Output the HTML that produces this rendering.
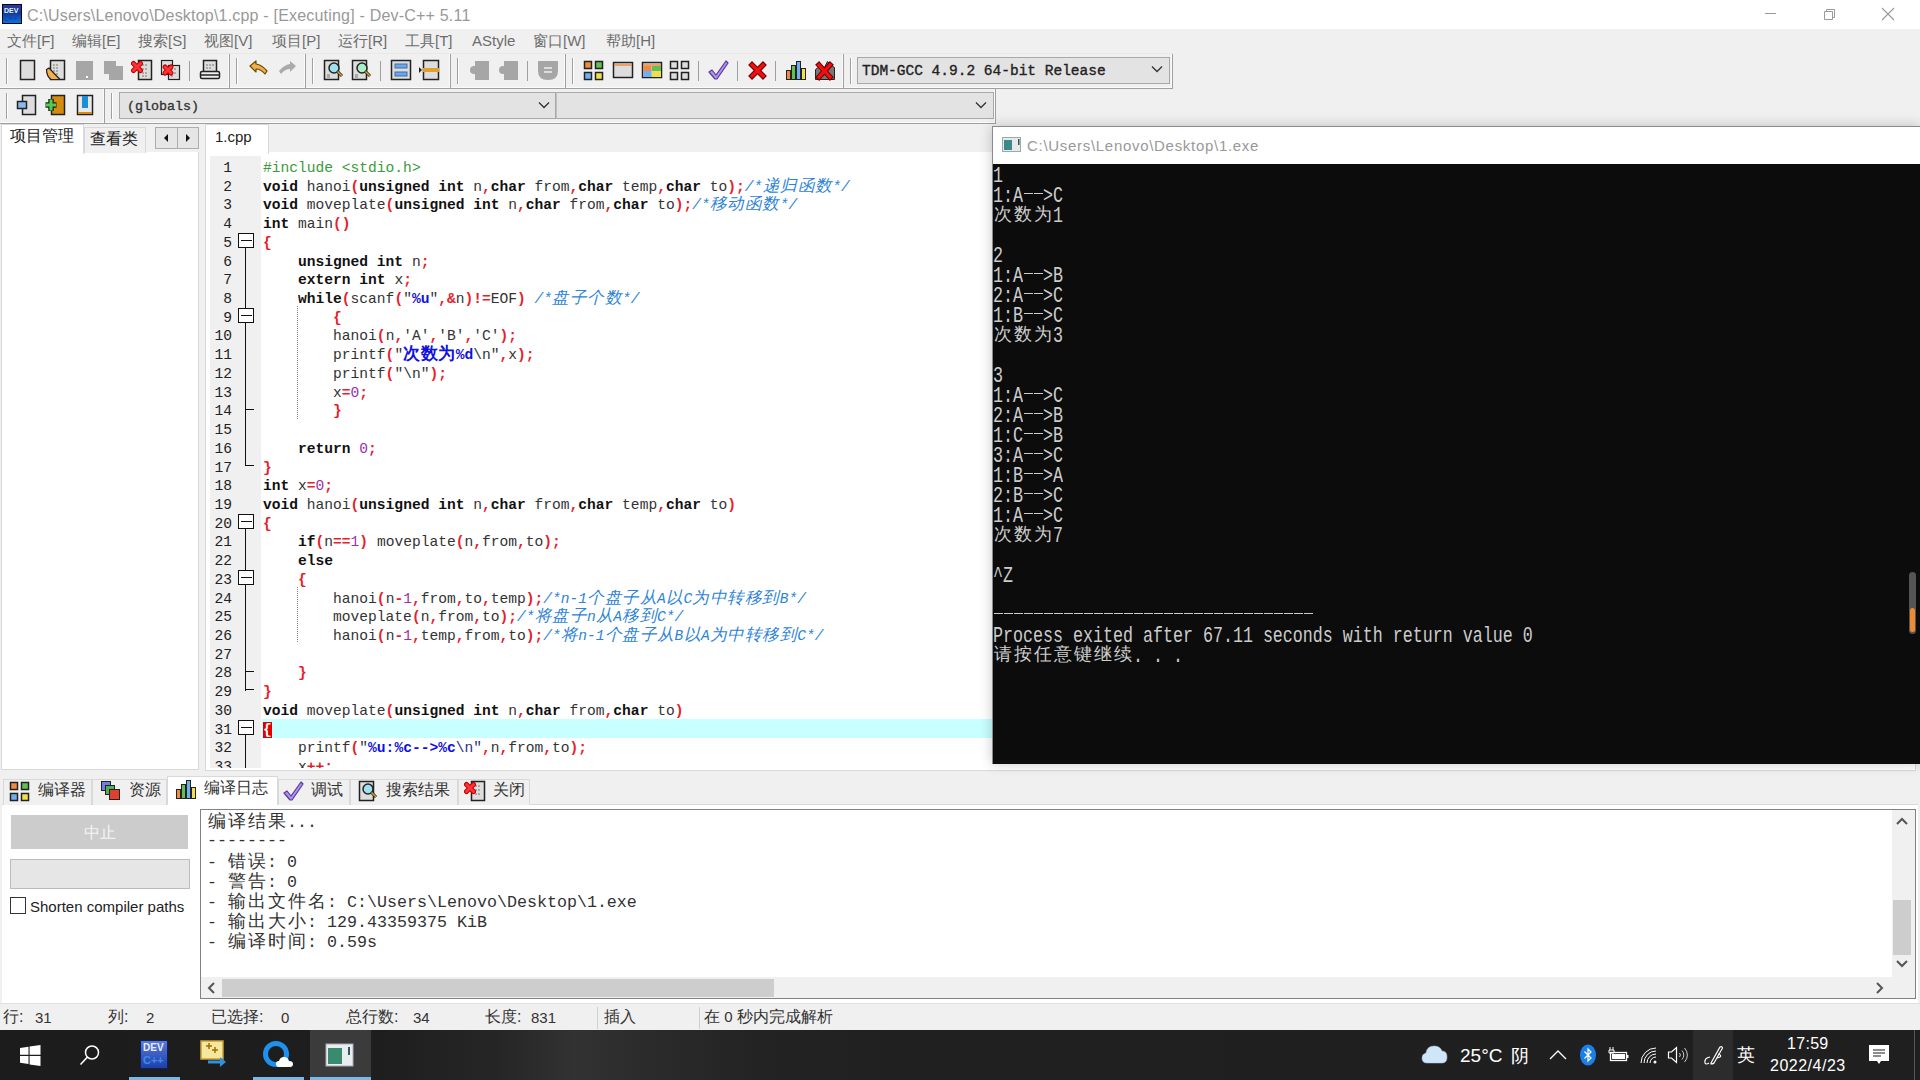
<!DOCTYPE html><html><head><meta charset="utf-8"><style>
*{margin:0;padding:0;box-sizing:border-box}
html,body{width:1920px;height:1080px;overflow:hidden;background:#f0f0f0;font-family:"Liberation Sans",sans-serif}
.a{position:absolute}
.t{position:absolute;white-space:pre;line-height:1}
.mono{font-family:"Liberation Mono",monospace}
.serif{font-family:"Liberation Serif",serif}
</style></head><body>
<div class="a" style="left:0;top:0;width:1920px;height:29px;background:#fff"></div>
<div class="a" style="left:2px;top:4px;width:20px;height:20px;background:linear-gradient(#2a3aa0,#103a9a 45%,#1470e0);border:1.5px solid #050520"></div>
<div class="t" style="left:4px;top:7px;font-size:7px;font-weight:bold;color:#e8eeff">DEV</div>
<div class="t" style="left:4px;top:15px;font-size:7px;font-weight:bold;color:#0a4ab0">C++</div>
<div class="t" style="left:27px;top:8px;font-size:16px;letter-spacing:0.2px;color:#999">C:\Users\Lenovo\Desktop\1.cpp - [Executing] - Dev-C++ 5.11</div>
<div class="a" style="left:1765px;top:13px;width:11px;height:1px;background:#999"></div>
<svg class="a" style="left:1822px;top:7px" width="14" height="14"><path d="M2.5 4.5h8v8h-8z M4.5 4.5v-2h8v8h-2" fill="none" stroke="#999" stroke-width="1"/></svg>
<svg class="a" style="left:1881px;top:7px" width="14" height="14"><path d="M1 1L13 13M13 1L1 13" stroke="#999" stroke-width="1.1"/></svg>
<div class="t" style="left:7px;top:33px;font-size:15px;color:#6d6d6d">文件[F]</div>
<div class="t" style="left:72px;top:33px;font-size:15px;color:#6d6d6d">编辑[E]</div>
<div class="t" style="left:138px;top:33px;font-size:15px;color:#6d6d6d">搜索[S]</div>
<div class="t" style="left:204px;top:33px;font-size:15px;color:#6d6d6d">视图[V]</div>
<div class="t" style="left:272px;top:33px;font-size:15px;color:#6d6d6d">项目[P]</div>
<div class="t" style="left:338px;top:33px;font-size:15px;color:#6d6d6d">运行[R]</div>
<div class="t" style="left:405px;top:33px;font-size:15px;color:#6d6d6d">工具[T]</div>
<div class="t" style="left:472px;top:33px;font-size:15px;color:#6d6d6d">AStyle</div>
<div class="t" style="left:533px;top:33px;font-size:15px;color:#6d6d6d">窗口[W]</div>
<div class="t" style="left:606px;top:33px;font-size:15px;color:#6d6d6d">帮助[H]</div>
<div class="a" style="left:0;top:53px;width:1173px;height:1px;background:#e8e8e8"></div>
<div class="a" style="left:0px;top:54px;width:230px;height:35px;border-right:1px solid #a0a0a0;border-bottom:1px solid #a0a0a0;box-shadow:inset -1px -1px 0 #fafafa"></div>
<div class="a" style="left:6px;top:58px;width:2px;height:26px;border-left:1px solid #a0a0a0;border-right:1px solid #fff"></div>
<div class="a" style="left:230px;top:54px;width:76px;height:35px;border-right:1px solid #a0a0a0;border-bottom:1px solid #a0a0a0;box-shadow:inset -1px -1px 0 #fafafa"></div>
<div class="a" style="left:236px;top:58px;width:2px;height:26px;border-left:1px solid #a0a0a0;border-right:1px solid #fff"></div>
<div class="a" style="left:306px;top:54px;width:145px;height:35px;border-right:1px solid #a0a0a0;border-bottom:1px solid #a0a0a0;box-shadow:inset -1px -1px 0 #fafafa"></div>
<div class="a" style="left:312px;top:58px;width:2px;height:26px;border-left:1px solid #a0a0a0;border-right:1px solid #fff"></div>
<div class="a" style="left:451px;top:54px;width:115px;height:35px;border-right:1px solid #a0a0a0;border-bottom:1px solid #a0a0a0;box-shadow:inset -1px -1px 0 #fafafa"></div>
<div class="a" style="left:457px;top:58px;width:2px;height:26px;border-left:1px solid #a0a0a0;border-right:1px solid #fff"></div>
<div class="a" style="left:566px;top:54px;width:278px;height:35px;border-right:1px solid #a0a0a0;border-bottom:1px solid #a0a0a0;box-shadow:inset -1px -1px 0 #fafafa"></div>
<div class="a" style="left:572px;top:58px;width:2px;height:26px;border-left:1px solid #a0a0a0;border-right:1px solid #fff"></div>
<div class="a" style="left:844px;top:54px;width:329px;height:35px;border-right:1px solid #a0a0a0;border-bottom:1px solid #a0a0a0;box-shadow:inset -1px -1px 0 #fafafa"></div>
<div class="a" style="left:850px;top:58px;width:2px;height:26px;border-left:1px solid #a0a0a0;border-right:1px solid #fff"></div>
<div class="a" style="left:0px;top:89px;width:105px;height:35px;border-right:1px solid #a0a0a0;border-bottom:1px solid #a0a0a0;box-shadow:inset -1px -1px 0 #fafafa"></div>
<div class="a" style="left:6px;top:93px;width:2px;height:26px;border-left:1px solid #a0a0a0;border-right:1px solid #fff"></div>
<div class="a" style="left:105px;top:89px;width:891px;height:35px;border-right:1px solid #a0a0a0;border-bottom:1px solid #a0a0a0;box-shadow:inset -1px -1px 0 #fafafa"></div>
<div class="a" style="left:111px;top:93px;width:2px;height:26px;border-left:1px solid #a0a0a0;border-right:1px solid #fff"></div>
<svg class="a" style="left:17px;top:59px" width="22" height="22" viewBox="0 0 22 22"><rect x="3.5" y="1.5" width="14" height="19" fill="#ddd" stroke="#222" stroke-width="1.5"/><path d="M5 3h9v16H5z" fill="url(#g1)" opacity="0"/></svg>
<svg class="a" style="left:45px;top:59px" width="22" height="22" viewBox="0 0 22 22"><rect x="5.5" y="1.5" width="14" height="19" fill="#ddd" stroke="#222" stroke-width="1.5"/><path d="M8 6h2M11 6h2M8 9h2M11 9h2M8 12h2M11 12h2M8 15h2M11 15h2" stroke="#777" stroke-width="1"/><path d="M1.5 10.5 L4 9 L15 20.5 L6 20.5 Q1.5 17 1.5 10.5z" fill="#f2b04a" stroke="#222" stroke-width="1.2"/></svg>
<svg class="a" style="left:74px;top:59px" width="22" height="22" viewBox="0 0 22 22"><path d="M2 2h17v19H2z" fill="#a6a6a6"/><rect x="12" y="17" width="2" height="2" fill="#fff"/></svg>
<svg class="a" style="left:103px;top:59px" width="22" height="22" viewBox="0 0 22 22"><path d="M1 2h12v13H1z" fill="#a6a6a6"/><path d="M6 7h14v14H6z" fill="#a6a6a6"/></svg>
<svg class="a" style="left:131px;top:59px" width="22" height="22" viewBox="0 0 22 22"><rect x="7.5" y="1.5" width="13" height="19" fill="#ddd" stroke="#222" stroke-width="1.5"/><path d="M11 6h2M14 6h2M11 10h2M14 10h2M11 14h2M14 14h2M11 17h2M14 17h2" stroke="#777"/><path d="M2.5 4.5L9.5 11.5M9.5 4.5L2.5 11.5" stroke="#b00" stroke-width="5" stroke-linecap="round"/><path d="M2.5 4.5L9.5 11.5M9.5 4.5L2.5 11.5" stroke="#f33" stroke-width="3" stroke-linecap="round"/></svg>
<svg class="a" style="left:160px;top:59px" width="22" height="22" viewBox="0 0 22 22"><rect x="1.5" y="1.5" width="11" height="14" fill="#ddd" stroke="#222" stroke-width="1.2"/><rect x="8.5" y="6.5" width="11" height="14" fill="#ddd" stroke="#222" stroke-width="1.2"/><path d="M11 10h2M14 10h2M11 14h2M14 14h2M11 17h2" stroke="#777"/><path d="M5 8L11 14M11 8L5 14" stroke="#b00" stroke-width="5" stroke-linecap="round"/><path d="M5 8L11 14M11 8L5 14" stroke="#f33" stroke-width="3" stroke-linecap="round"/></svg>
<div class="a" style="left:189px;top:61px;width:1px;height:20px;background:#a0a0a0"></div>
<svg class="a" style="left:199px;top:59px" width="22" height="22" viewBox="0 0 22 22"><rect x="4.5" y="1.5" width="13" height="12" fill="#ddd" stroke="#222" stroke-width="1.5"/><path d="M7 6h2M10 6h2M13 6h2M7 9h2M10 9h2" stroke="#777"/><rect x="1.5" y="12.5" width="19" height="7" rx="1.5" fill="#eee" stroke="#222" stroke-width="1.5"/><path d="M2 16h18" stroke="#222" stroke-width="1.5"/></svg>
<svg class="a" style="left:248px;top:60px" width="22" height="22" viewBox="0 0 22 22"><path d="M2 6 L8 1 L8 4 Q14 5 19 11 L17 14 Q13 9 8 9 L8 12z" fill="#f2b04a" stroke="#6b4a00" stroke-width="1.2" stroke-linejoin="round"/></svg>
<svg class="a" style="left:276px;top:60px" width="22" height="22" viewBox="0 0 22 22"><path d="M20 6 L14 1 L14 4 Q8 5 3 11 L5 14 Q9 9 14 9 L14 12z" fill="#aaa"/></svg>
<svg class="a" style="left:323px;top:59px" width="22" height="22" viewBox="0 0 22 22"><rect x="1.5" y="1.5" width="14" height="19" fill="#ddd" stroke="#222" stroke-width="1.5"/><path d="M4 16h3M4 18h3" stroke="#777"/><circle cx="11" cy="9" r="5" fill="#9fe0f0" stroke="#222" stroke-width="1.5"/><path d="M14.5 12.5L19 17" stroke="#222" stroke-width="3"/><path d="M14.5 12.5L19 17" stroke="#d9a030" stroke-width="1.6"/></svg>
<svg class="a" style="left:351px;top:59px" width="22" height="22" viewBox="0 0 22 22"><rect x="1.5" y="1.5" width="14" height="19" fill="#ddd" stroke="#222" stroke-width="1.5"/><path d="M4 16h3M4 18h3" stroke="#777"/><circle cx="11" cy="9" r="5" fill="#a8efc8" stroke="#222" stroke-width="1.5"/><path d="M14.5 12.5L19 17" stroke="#222" stroke-width="3"/><path d="M14.5 12.5L19 17" stroke="#d9a030" stroke-width="1.6"/></svg>
<div class="a" style="left:380px;top:61px;width:1px;height:20px;background:#a0a0a0"></div>
<svg class="a" style="left:390px;top:59px" width="22" height="22" viewBox="0 0 22 22"><rect x="1.5" y="1.5" width="19" height="19" fill="#ddd" stroke="#222" stroke-width="1.5"/><rect x="5" y="5" width="12" height="4" fill="#6fa6e6" stroke="#3a6fb0"/><rect x="5" y="13" width="12" height="4" fill="#6fa6e6" stroke="#3a6fb0"/></svg>
<svg class="a" style="left:418px;top:59px" width="22" height="22" viewBox="0 0 22 22"><path d="M1 8l3 3-3 3z" fill="#222"/><rect x="5.5" y="1.5" width="15" height="19" fill="#ddd" stroke="#222" stroke-width="1.5"/><rect x="5" y="9" width="16" height="4" fill="#e0a030"/></svg>
<svg class="a" style="left:469px;top:59px" width="22" height="22" viewBox="0 0 22 22"><path d="M6 2h14v19H6z" fill="#a6a6a6"/><circle cx="5" cy="11" r="4" fill="#a6a6a6"/></svg>
<svg class="a" style="left:498px;top:59px" width="22" height="22" viewBox="0 0 22 22"><path d="M6 2h14v19H6z" fill="#a6a6a6"/><circle cx="5" cy="11" r="4" fill="#a6a6a6"/></svg>
<div class="a" style="left:527px;top:61px;width:1px;height:20px;background:#a0a0a0"></div>
<svg class="a" style="left:537px;top:59px" width="22" height="22" viewBox="0 0 22 22"><path d="M1 2h20v10q0 9-10 9q-10 0-10-9z" fill="#a6a6a6"/><path d="M7 9h8M7 13h8" stroke="#eee" stroke-width="1.5"/></svg>
<svg class="a" style="left:583px;top:59px" width="22" height="22" viewBox="0 0 22 22"><rect x="1.5" y="2.5" width="7" height="7" fill="#f08a40" stroke="#222" stroke-width="1.5"/><rect x="12.5" y="2.5" width="7" height="7" fill="#60c050" stroke="#222" stroke-width="1.5"/><rect x="1.5" y="13.5" width="7" height="7" fill="#70b0f0" stroke="#222" stroke-width="1.5"/><rect x="12.5" y="13.5" width="7" height="7" fill="#f0e050" stroke="#222" stroke-width="1.5"/></svg>
<svg class="a" style="left:612px;top:59px" width="22" height="22" viewBox="0 0 22 22"><rect x="1.5" y="3.5" width="19" height="15" fill="#ddd" stroke="#222" stroke-width="1.5"/><path d="M2 6h18" stroke="#f08a40" stroke-width="1.5"/></svg>
<svg class="a" style="left:641px;top:59px" width="22" height="22" viewBox="0 0 22 22"><rect x="1.5" y="3.5" width="19" height="15" fill="#ddd" stroke="#222" stroke-width="1.5"/><path d="M2 6h18" stroke="#f08a40" stroke-width="1.5"/><rect x="2.5" y="7" width="8" height="5" fill="#f08a40"/><rect x="11" y="7" width="9" height="5" fill="#60c050"/><rect x="2.5" y="12" width="8" height="6" fill="#70b0f0"/><rect x="11" y="12" width="9" height="6" fill="#f0e050"/></svg>
<svg class="a" style="left:669px;top:59px" width="22" height="22" viewBox="0 0 22 22"><rect x="1.5" y="2.5" width="7" height="7" fill="#ddd" stroke="#222" stroke-width="1.5"/><rect x="12.5" y="2.5" width="7" height="7" fill="#ddd" stroke="#222" stroke-width="1.5"/><rect x="1.5" y="13.5" width="7" height="7" fill="#ddd" stroke="#222" stroke-width="1.5"/><rect x="12.5" y="13.5" width="7" height="7" fill="#ddd" stroke="#222" stroke-width="1.5"/></svg>
<div class="a" style="left:698px;top:61px;width:1px;height:20px;background:#a0a0a0"></div>
<svg class="a" style="left:707px;top:59px" width="22" height="22" viewBox="0 0 22 22"><path d="M2 13 L5 11 L9 16 L19 2 L21 4 L10 20 L8 20z" fill="#b090f0" stroke="#5a3a9a" stroke-width="1.2" stroke-linejoin="round"/></svg>
<div class="a" style="left:737px;top:61px;width:1px;height:20px;background:#a0a0a0"></div>
<svg class="a" style="left:747px;top:59px" width="22" height="22" viewBox="0 0 22 22"><path d="M5 6L16 17M16 6L5 17" stroke="#7a0000" stroke-width="5.5" stroke-linecap="square"/><path d="M5 6L16 17M16 6L5 17" stroke="#f01010" stroke-width="3.2" stroke-linecap="square"/></svg>
<div class="a" style="left:775px;top:61px;width:1px;height:20px;background:#a0a0a0"></div>
<svg class="a" style="left:785px;top:59px" width="22" height="22" viewBox="0 0 22 22"><rect x="1.5" y="11.5" width="4" height="9" fill="#f08a40" stroke="#222"/><rect x="6.5" y="6.5" width="4" height="14" fill="#60c050" stroke="#222"/><rect x="11.5" y="2.5" width="4" height="18" fill="#70b0f0" stroke="#222"/><rect x="16.5" y="9.5" width="4" height="11" fill="#f0e050" stroke="#222"/></svg>
<svg class="a" style="left:814px;top:59px" width="22" height="22" viewBox="0 0 22 22"><path d="M1.5 20.5v-10l4-3 4 3 4-8 4 4 3 2v12z" fill="#777" stroke="#222"/><path d="M5 6L16 18M16 6L5 18" stroke="#7a0000" stroke-width="5.5" stroke-linecap="square"/><path d="M5 6L16 18M16 6L5 18" stroke="#f01010" stroke-width="3.2" stroke-linecap="square"/></svg>
<div class="a" style="left:857px;top:57px;width:313px;height:27px;background:#e3e3e3;border:1px solid #a8a8a8"></div>
<div class="t mono" style="left:862px;top:64px;font-size:14.5px;color:#222;-webkit-text-stroke:0.35px #222">TDM-GCC 4.9.2 64-bit Release</div>
<svg class="a" style="left:1151px;top:65px" width="12" height="8"><path d="M1 1.5L6 6.5L11 1.5" fill="none" stroke="#333" stroke-width="1.3"/></svg>
<svg class="a" style="left:16px;top:94px" width="22" height="22" viewBox="0 0 22 22"><rect x="6.5" y="1.5" width="13" height="19" fill="#ddd" stroke="#222" stroke-width="1.5"/><rect x="1.5" y="7.5" width="9" height="7" fill="#8ab8f0" stroke="#222" stroke-width="1.5"/></svg>
<svg class="a" style="left:45px;top:94px" width="22" height="22" viewBox="0 0 22 22"><rect x="6.5" y="1.5" width="13" height="19" fill="#d58a10" stroke="#222" stroke-width="1.5"/><path d="M6 5v12M0.5 11h11" stroke="#222" stroke-width="5.5"/><path d="M6 5.5v11M1 11h10" stroke="#4ed04e" stroke-width="3"/></svg>
<svg class="a" style="left:74px;top:94px" width="22" height="22" viewBox="0 0 22 22"><rect x="3.5" y="1.5" width="15" height="19" fill="#e8e8e8" stroke="#222" stroke-width="1.5"/><rect x="8" y="2" width="6" height="12" fill="#1a8fd8"/><path d="M4 19h14" stroke="#d58a10" stroke-width="2"/></svg>
<div class="a" style="left:119px;top:92px;width:437px;height:27px;background:#e3e3e3;border:1px solid #a8a8a8"></div>
<div class="t mono" style="left:127px;top:100px;font-size:13.33px;color:#333;-webkit-text-stroke:0.35px #333">(globals)</div>
<svg class="a" style="left:538px;top:101px" width="12" height="8"><path d="M1 1.5L6 6.5L11 1.5" fill="none" stroke="#333" stroke-width="1.3"/></svg>
<div class="a" style="left:556px;top:92px;width:438px;height:27px;background:#e3e3e3;border:1px solid #a8a8a8;border-left:1px solid #c0c0c0"></div>
<svg class="a" style="left:975px;top:101px" width="12" height="8"><path d="M1 1.5L6 6.5L11 1.5" fill="none" stroke="#333" stroke-width="1.3"/></svg>
<div class="a" style="left:1px;top:152px;width:198px;height:618px;background:#fff;border:1px solid #d9d9d9;border-top:none"></div>
<div class="a" style="left:84px;top:127px;width:62px;height:26px;background:#f0f0f0;border:1px solid #d9d9d9;border-bottom:none"></div>
<div class="a" style="left:1px;top:124px;width:83px;height:30px;background:#fff;border:1px solid #d9d9d9;border-bottom:none"></div>
<div class="t" style="left:10px;top:128px;font-size:16px;color:#222">项目管理</div>
<div class="t" style="left:90px;top:131px;font-size:16px;color:#222">查看类</div>
<div class="a" style="left:155px;top:127px;width:44px;height:22px;background:#e6e6e6;border:1px solid #adadad"></div>
<div class="a" style="left:177px;top:128px;width:1px;height:20px;background:#adadad"></div>
<svg class="a" style="left:162px;top:133px" width="8" height="10"><path d="M6 1L2 5L6 9z" fill="#111"/></svg>
<svg class="a" style="left:184px;top:133px" width="8" height="10"><path d="M2 1L6 5L2 9z" fill="#111"/></svg>
<div class="a" style="left:205px;top:152px;width:1711px;height:619px;background:#fff;border:1px solid #d9d9d9;border-top:none"></div>
<div class="a" style="left:205px;top:124px;width:64px;height:30px;background:#fff;border:1px solid #d9d9d9;border-bottom:none"></div>
<div class="t" style="left:215px;top:129px;font-size:15px;color:#222">1.cpp</div>
<div class="a" style="left:210px;top:156px;width:51px;height:612px;background:#f0f0f0"></div>
<div class="a" style="left:262px;top:718.90px;width:731px;height:18.72px;background:#c8ffff"></div>
<div class="a" style="left:205px;top:156px;width:788px;height:612px;overflow:hidden">
<div class="t mono" style="left:18.25px;top:3.00px;height:18.72px;line-height:18.72px;font-size:14.6px;color:#222">1</div>
<div class="t mono" style="left:58.00px;top:3.00px;height:18.72px;line-height:18.72px;font-size:14.6px"><span style="color:#3a9a3a">#include &lt;stdio.h&gt;</span></div>
<div class="t mono" style="left:18.25px;top:21.72px;height:18.72px;line-height:18.72px;font-size:14.6px;color:#222">2</div>
<div class="t mono" style="left:58.00px;top:21.72px;height:18.72px;line-height:18.72px;font-size:14.6px"><span style="color:#111;font-weight:bold">void</span><span style="color:#333"> hanoi</span><span style="color:#e8202a;font-weight:bold">(</span><span style="color:#111;font-weight:bold">unsigned</span><span style="color:#333"> </span><span style="color:#111;font-weight:bold">int</span><span style="color:#333"> n</span><span style="color:#e8202a;font-weight:bold">,</span><span style="color:#111;font-weight:bold">char</span><span style="color:#333"> from</span><span style="color:#e8202a;font-weight:bold">,</span><span style="color:#111;font-weight:bold">char</span><span style="color:#333"> temp</span><span style="color:#e8202a;font-weight:bold">,</span><span style="color:#111;font-weight:bold">char</span><span style="color:#333"> to</span><span style="color:#e8202a;font-weight:bold">);</span><span style="color:#2d83d6;font-style:italic">/*<span style="display:inline-block;width:17.5px;text-align:center;font-size:16.5px;vertical-align:top">递</span><span style="display:inline-block;width:17.5px;text-align:center;font-size:16.5px;vertical-align:top">归</span><span style="display:inline-block;width:17.5px;text-align:center;font-size:16.5px;vertical-align:top">函</span><span style="display:inline-block;width:17.5px;text-align:center;font-size:16.5px;vertical-align:top">数</span>*/</span></div>
<div class="t mono" style="left:18.25px;top:40.44px;height:18.72px;line-height:18.72px;font-size:14.6px;color:#222">3</div>
<div class="t mono" style="left:58.00px;top:40.44px;height:18.72px;line-height:18.72px;font-size:14.6px"><span style="color:#111;font-weight:bold">void</span><span style="color:#333"> moveplate</span><span style="color:#e8202a;font-weight:bold">(</span><span style="color:#111;font-weight:bold">unsigned</span><span style="color:#333"> </span><span style="color:#111;font-weight:bold">int</span><span style="color:#333"> n</span><span style="color:#e8202a;font-weight:bold">,</span><span style="color:#111;font-weight:bold">char</span><span style="color:#333"> from</span><span style="color:#e8202a;font-weight:bold">,</span><span style="color:#111;font-weight:bold">char</span><span style="color:#333"> to</span><span style="color:#e8202a;font-weight:bold">);</span><span style="color:#2d83d6;font-style:italic">/*<span style="display:inline-block;width:17.5px;text-align:center;font-size:16.5px;vertical-align:top">移</span><span style="display:inline-block;width:17.5px;text-align:center;font-size:16.5px;vertical-align:top">动</span><span style="display:inline-block;width:17.5px;text-align:center;font-size:16.5px;vertical-align:top">函</span><span style="display:inline-block;width:17.5px;text-align:center;font-size:16.5px;vertical-align:top">数</span>*/</span></div>
<div class="t mono" style="left:18.25px;top:59.16px;height:18.72px;line-height:18.72px;font-size:14.6px;color:#222">4</div>
<div class="t mono" style="left:58.00px;top:59.16px;height:18.72px;line-height:18.72px;font-size:14.6px"><span style="color:#111;font-weight:bold">int</span><span style="color:#333"> main</span><span style="color:#e8202a;font-weight:bold">()</span></div>
<div class="t mono" style="left:18.25px;top:77.88px;height:18.72px;line-height:18.72px;font-size:14.6px;color:#222">5</div>
<div class="t mono" style="left:58.00px;top:77.88px;height:18.72px;line-height:18.72px;font-size:14.6px"><span style="color:#e8202a;font-weight:bold">{</span></div>
<div class="t mono" style="left:18.25px;top:96.60px;height:18.72px;line-height:18.72px;font-size:14.6px;color:#222">6</div>
<div class="t mono" style="left:58.00px;top:96.60px;height:18.72px;line-height:18.72px;font-size:14.6px"><span style="color:#333">    </span><span style="color:#111;font-weight:bold">unsigned</span><span style="color:#333"> </span><span style="color:#111;font-weight:bold">int</span><span style="color:#333"> n</span><span style="color:#e8202a;font-weight:bold">;</span></div>
<div class="t mono" style="left:18.25px;top:115.32px;height:18.72px;line-height:18.72px;font-size:14.6px;color:#222">7</div>
<div class="t mono" style="left:58.00px;top:115.32px;height:18.72px;line-height:18.72px;font-size:14.6px"><span style="color:#333">    </span><span style="color:#111;font-weight:bold">extern</span><span style="color:#333"> </span><span style="color:#111;font-weight:bold">int</span><span style="color:#333"> x</span><span style="color:#e8202a;font-weight:bold">;</span></div>
<div class="t mono" style="left:18.25px;top:134.04px;height:18.72px;line-height:18.72px;font-size:14.6px;color:#222">8</div>
<div class="t mono" style="left:58.00px;top:134.04px;height:18.72px;line-height:18.72px;font-size:14.6px"><span style="color:#333">    </span><span style="color:#111;font-weight:bold">while</span><span style="color:#e8202a;font-weight:bold">(</span><span style="color:#333">scanf</span><span style="color:#e8202a;font-weight:bold">(</span><span style="color:#333">&quot;</span><span style="color:#1010e0;font-weight:bold">%u</span><span style="color:#333">&quot;</span><span style="color:#e8202a;font-weight:bold">,&amp;</span><span style="color:#333">n</span><span style="color:#e8202a;font-weight:bold">)!=</span><span style="color:#333">EOF</span><span style="color:#e8202a;font-weight:bold">)</span><span style="color:#333"> </span><span style="color:#2d83d6;font-style:italic">/*<span style="display:inline-block;width:17.5px;text-align:center;font-size:16.5px;vertical-align:top">盘</span><span style="display:inline-block;width:17.5px;text-align:center;font-size:16.5px;vertical-align:top">子</span><span style="display:inline-block;width:17.5px;text-align:center;font-size:16.5px;vertical-align:top">个</span><span style="display:inline-block;width:17.5px;text-align:center;font-size:16.5px;vertical-align:top">数</span>*/</span></div>
<div class="t mono" style="left:18.25px;top:152.76px;height:18.72px;line-height:18.72px;font-size:14.6px;color:#222">9</div>
<div class="t mono" style="left:58.00px;top:152.76px;height:18.72px;line-height:18.72px;font-size:14.6px"><span style="color:#333">        </span><span style="color:#e8202a;font-weight:bold">{</span></div>
<div class="t mono" style="left:9.50px;top:171.48px;height:18.72px;line-height:18.72px;font-size:14.6px;color:#222">10</div>
<div class="t mono" style="left:58.00px;top:171.48px;height:18.72px;line-height:18.72px;font-size:14.6px"><span style="color:#333">        hanoi</span><span style="color:#e8202a;font-weight:bold">(</span><span style="color:#333">n</span><span style="color:#e8202a;font-weight:bold">,</span><span style="color:#333">&#x27;A&#x27;</span><span style="color:#e8202a;font-weight:bold">,</span><span style="color:#333">&#x27;B&#x27;</span><span style="color:#e8202a;font-weight:bold">,</span><span style="color:#333">&#x27;C&#x27;</span><span style="color:#e8202a;font-weight:bold">);</span></div>
<div class="t mono" style="left:9.50px;top:190.20px;height:18.72px;line-height:18.72px;font-size:14.6px;color:#222">11</div>
<div class="t mono" style="left:58.00px;top:190.20px;height:18.72px;line-height:18.72px;font-size:14.6px"><span style="color:#333">        printf</span><span style="color:#e8202a;font-weight:bold">(</span><span style="color:#333">&quot;</span><span style="color:#1010e0;font-weight:bold"><span style="display:inline-block;width:17.5px;text-align:center;font-size:16.5px;vertical-align:top">次</span><span style="display:inline-block;width:17.5px;text-align:center;font-size:16.5px;vertical-align:top">数</span><span style="display:inline-block;width:17.5px;text-align:center;font-size:16.5px;vertical-align:top">为</span>%d</span><span style="color:#333">\n&quot;</span><span style="color:#e8202a;font-weight:bold">,</span><span style="color:#333">x</span><span style="color:#e8202a;font-weight:bold">);</span></div>
<div class="t mono" style="left:9.50px;top:208.92px;height:18.72px;line-height:18.72px;font-size:14.6px;color:#222">12</div>
<div class="t mono" style="left:58.00px;top:208.92px;height:18.72px;line-height:18.72px;font-size:14.6px"><span style="color:#333">        printf</span><span style="color:#e8202a;font-weight:bold">(</span><span style="color:#333">&quot;\n&quot;</span><span style="color:#e8202a;font-weight:bold">);</span></div>
<div class="t mono" style="left:9.50px;top:227.64px;height:18.72px;line-height:18.72px;font-size:14.6px;color:#222">13</div>
<div class="t mono" style="left:58.00px;top:227.64px;height:18.72px;line-height:18.72px;font-size:14.6px"><span style="color:#333">        x</span><span style="color:#e8202a;font-weight:bold">=</span><span style="color:#9a2fa8">0</span><span style="color:#e8202a;font-weight:bold">;</span></div>
<div class="t mono" style="left:9.50px;top:246.36px;height:18.72px;line-height:18.72px;font-size:14.6px;color:#222">14</div>
<div class="t mono" style="left:58.00px;top:246.36px;height:18.72px;line-height:18.72px;font-size:14.6px"><span style="color:#333">        </span><span style="color:#e8202a;font-weight:bold">}</span></div>
<div class="t mono" style="left:9.50px;top:265.08px;height:18.72px;line-height:18.72px;font-size:14.6px;color:#222">15</div>
<div class="t mono" style="left:9.50px;top:283.80px;height:18.72px;line-height:18.72px;font-size:14.6px;color:#222">16</div>
<div class="t mono" style="left:58.00px;top:283.80px;height:18.72px;line-height:18.72px;font-size:14.6px"><span style="color:#333">    </span><span style="color:#111;font-weight:bold">return</span><span style="color:#333"> </span><span style="color:#9a2fa8">0</span><span style="color:#e8202a;font-weight:bold">;</span></div>
<div class="t mono" style="left:9.50px;top:302.52px;height:18.72px;line-height:18.72px;font-size:14.6px;color:#222">17</div>
<div class="t mono" style="left:58.00px;top:302.52px;height:18.72px;line-height:18.72px;font-size:14.6px"><span style="color:#e8202a;font-weight:bold">}</span></div>
<div class="t mono" style="left:9.50px;top:321.24px;height:18.72px;line-height:18.72px;font-size:14.6px;color:#222">18</div>
<div class="t mono" style="left:58.00px;top:321.24px;height:18.72px;line-height:18.72px;font-size:14.6px"><span style="color:#111;font-weight:bold">int</span><span style="color:#333"> x</span><span style="color:#e8202a;font-weight:bold">=</span><span style="color:#9a2fa8">0</span><span style="color:#e8202a;font-weight:bold">;</span></div>
<div class="t mono" style="left:9.50px;top:339.96px;height:18.72px;line-height:18.72px;font-size:14.6px;color:#222">19</div>
<div class="t mono" style="left:58.00px;top:339.96px;height:18.72px;line-height:18.72px;font-size:14.6px"><span style="color:#111;font-weight:bold">void</span><span style="color:#333"> hanoi</span><span style="color:#e8202a;font-weight:bold">(</span><span style="color:#111;font-weight:bold">unsigned</span><span style="color:#333"> </span><span style="color:#111;font-weight:bold">int</span><span style="color:#333"> n</span><span style="color:#e8202a;font-weight:bold">,</span><span style="color:#111;font-weight:bold">char</span><span style="color:#333"> from</span><span style="color:#e8202a;font-weight:bold">,</span><span style="color:#111;font-weight:bold">char</span><span style="color:#333"> temp</span><span style="color:#e8202a;font-weight:bold">,</span><span style="color:#111;font-weight:bold">char</span><span style="color:#333"> to</span><span style="color:#e8202a;font-weight:bold">)</span></div>
<div class="t mono" style="left:9.50px;top:358.68px;height:18.72px;line-height:18.72px;font-size:14.6px;color:#222">20</div>
<div class="t mono" style="left:58.00px;top:358.68px;height:18.72px;line-height:18.72px;font-size:14.6px"><span style="color:#e8202a;font-weight:bold">{</span></div>
<div class="t mono" style="left:9.50px;top:377.40px;height:18.72px;line-height:18.72px;font-size:14.6px;color:#222">21</div>
<div class="t mono" style="left:58.00px;top:377.40px;height:18.72px;line-height:18.72px;font-size:14.6px"><span style="color:#333">    </span><span style="color:#111;font-weight:bold">if</span><span style="color:#e8202a;font-weight:bold">(</span><span style="color:#333">n</span><span style="color:#e8202a;font-weight:bold">==</span><span style="color:#9a2fa8">1</span><span style="color:#e8202a;font-weight:bold">)</span><span style="color:#333"> moveplate</span><span style="color:#e8202a;font-weight:bold">(</span><span style="color:#333">n</span><span style="color:#e8202a;font-weight:bold">,</span><span style="color:#333">from</span><span style="color:#e8202a;font-weight:bold">,</span><span style="color:#333">to</span><span style="color:#e8202a;font-weight:bold">);</span></div>
<div class="t mono" style="left:9.50px;top:396.12px;height:18.72px;line-height:18.72px;font-size:14.6px;color:#222">22</div>
<div class="t mono" style="left:58.00px;top:396.12px;height:18.72px;line-height:18.72px;font-size:14.6px"><span style="color:#333">    </span><span style="color:#111;font-weight:bold">else</span></div>
<div class="t mono" style="left:9.50px;top:414.84px;height:18.72px;line-height:18.72px;font-size:14.6px;color:#222">23</div>
<div class="t mono" style="left:58.00px;top:414.84px;height:18.72px;line-height:18.72px;font-size:14.6px"><span style="color:#333">    </span><span style="color:#e8202a;font-weight:bold">{</span></div>
<div class="t mono" style="left:9.50px;top:433.56px;height:18.72px;line-height:18.72px;font-size:14.6px;color:#222">24</div>
<div class="t mono" style="left:58.00px;top:433.56px;height:18.72px;line-height:18.72px;font-size:14.6px"><span style="color:#333">        hanoi</span><span style="color:#e8202a;font-weight:bold">(</span><span style="color:#333">n</span><span style="color:#e8202a;font-weight:bold">-</span><span style="color:#9a2fa8">1</span><span style="color:#e8202a;font-weight:bold">,</span><span style="color:#333">from</span><span style="color:#e8202a;font-weight:bold">,</span><span style="color:#333">to</span><span style="color:#e8202a;font-weight:bold">,</span><span style="color:#333">temp</span><span style="color:#e8202a;font-weight:bold">);</span><span style="color:#2d83d6;font-style:italic">/*n-1<span style="display:inline-block;width:17.5px;text-align:center;font-size:16.5px;vertical-align:top">个</span><span style="display:inline-block;width:17.5px;text-align:center;font-size:16.5px;vertical-align:top">盘</span><span style="display:inline-block;width:17.5px;text-align:center;font-size:16.5px;vertical-align:top">子</span><span style="display:inline-block;width:17.5px;text-align:center;font-size:16.5px;vertical-align:top">从</span>A<span style="display:inline-block;width:17.5px;text-align:center;font-size:16.5px;vertical-align:top">以</span>C<span style="display:inline-block;width:17.5px;text-align:center;font-size:16.5px;vertical-align:top">为</span><span style="display:inline-block;width:17.5px;text-align:center;font-size:16.5px;vertical-align:top">中</span><span style="display:inline-block;width:17.5px;text-align:center;font-size:16.5px;vertical-align:top">转</span><span style="display:inline-block;width:17.5px;text-align:center;font-size:16.5px;vertical-align:top">移</span><span style="display:inline-block;width:17.5px;text-align:center;font-size:16.5px;vertical-align:top">到</span>B*/</span></div>
<div class="t mono" style="left:9.50px;top:452.28px;height:18.72px;line-height:18.72px;font-size:14.6px;color:#222">25</div>
<div class="t mono" style="left:58.00px;top:452.28px;height:18.72px;line-height:18.72px;font-size:14.6px"><span style="color:#333">        moveplate</span><span style="color:#e8202a;font-weight:bold">(</span><span style="color:#333">n</span><span style="color:#e8202a;font-weight:bold">,</span><span style="color:#333">from</span><span style="color:#e8202a;font-weight:bold">,</span><span style="color:#333">to</span><span style="color:#e8202a;font-weight:bold">);</span><span style="color:#2d83d6;font-style:italic">/*<span style="display:inline-block;width:17.5px;text-align:center;font-size:16.5px;vertical-align:top">将</span><span style="display:inline-block;width:17.5px;text-align:center;font-size:16.5px;vertical-align:top">盘</span><span style="display:inline-block;width:17.5px;text-align:center;font-size:16.5px;vertical-align:top">子</span>n<span style="display:inline-block;width:17.5px;text-align:center;font-size:16.5px;vertical-align:top">从</span>A<span style="display:inline-block;width:17.5px;text-align:center;font-size:16.5px;vertical-align:top">移</span><span style="display:inline-block;width:17.5px;text-align:center;font-size:16.5px;vertical-align:top">到</span>C*/</span></div>
<div class="t mono" style="left:9.50px;top:471.00px;height:18.72px;line-height:18.72px;font-size:14.6px;color:#222">26</div>
<div class="t mono" style="left:58.00px;top:471.00px;height:18.72px;line-height:18.72px;font-size:14.6px"><span style="color:#333">        hanoi</span><span style="color:#e8202a;font-weight:bold">(</span><span style="color:#333">n</span><span style="color:#e8202a;font-weight:bold">-</span><span style="color:#9a2fa8">1</span><span style="color:#e8202a;font-weight:bold">,</span><span style="color:#333">temp</span><span style="color:#e8202a;font-weight:bold">,</span><span style="color:#333">from</span><span style="color:#e8202a;font-weight:bold">,</span><span style="color:#333">to</span><span style="color:#e8202a;font-weight:bold">);</span><span style="color:#2d83d6;font-style:italic">/*<span style="display:inline-block;width:17.5px;text-align:center;font-size:16.5px;vertical-align:top">将</span>n-1<span style="display:inline-block;width:17.5px;text-align:center;font-size:16.5px;vertical-align:top">个</span><span style="display:inline-block;width:17.5px;text-align:center;font-size:16.5px;vertical-align:top">盘</span><span style="display:inline-block;width:17.5px;text-align:center;font-size:16.5px;vertical-align:top">子</span><span style="display:inline-block;width:17.5px;text-align:center;font-size:16.5px;vertical-align:top">从</span>B<span style="display:inline-block;width:17.5px;text-align:center;font-size:16.5px;vertical-align:top">以</span>A<span style="display:inline-block;width:17.5px;text-align:center;font-size:16.5px;vertical-align:top">为</span><span style="display:inline-block;width:17.5px;text-align:center;font-size:16.5px;vertical-align:top">中</span><span style="display:inline-block;width:17.5px;text-align:center;font-size:16.5px;vertical-align:top">转</span><span style="display:inline-block;width:17.5px;text-align:center;font-size:16.5px;vertical-align:top">移</span><span style="display:inline-block;width:17.5px;text-align:center;font-size:16.5px;vertical-align:top">到</span>C*/</span></div>
<div class="t mono" style="left:9.50px;top:489.72px;height:18.72px;line-height:18.72px;font-size:14.6px;color:#222">27</div>
<div class="t mono" style="left:9.50px;top:508.44px;height:18.72px;line-height:18.72px;font-size:14.6px;color:#222">28</div>
<div class="t mono" style="left:58.00px;top:508.44px;height:18.72px;line-height:18.72px;font-size:14.6px"><span style="color:#333">    </span><span style="color:#e8202a;font-weight:bold">}</span></div>
<div class="t mono" style="left:9.50px;top:527.16px;height:18.72px;line-height:18.72px;font-size:14.6px;color:#222">29</div>
<div class="t mono" style="left:58.00px;top:527.16px;height:18.72px;line-height:18.72px;font-size:14.6px"><span style="color:#e8202a;font-weight:bold">}</span></div>
<div class="t mono" style="left:9.50px;top:545.88px;height:18.72px;line-height:18.72px;font-size:14.6px;color:#222">30</div>
<div class="t mono" style="left:58.00px;top:545.88px;height:18.72px;line-height:18.72px;font-size:14.6px"><span style="color:#111;font-weight:bold">void</span><span style="color:#333"> moveplate</span><span style="color:#e8202a;font-weight:bold">(</span><span style="color:#111;font-weight:bold">unsigned</span><span style="color:#333"> </span><span style="color:#111;font-weight:bold">int</span><span style="color:#333"> n</span><span style="color:#e8202a;font-weight:bold">,</span><span style="color:#111;font-weight:bold">char</span><span style="color:#333"> from</span><span style="color:#e8202a;font-weight:bold">,</span><span style="color:#111;font-weight:bold">char</span><span style="color:#333"> to</span><span style="color:#e8202a;font-weight:bold">)</span></div>
<div class="t mono" style="left:9.50px;top:564.60px;height:18.72px;line-height:18.72px;font-size:14.6px;color:#222">31</div>
<div class="t mono" style="left:58.00px;top:564.60px;height:18.72px;line-height:18.72px;font-size:14.6px"><span style="color:#fff;background:#e00000;font-weight:bold">{</span></div>
<div class="t mono" style="left:9.50px;top:583.32px;height:18.72px;line-height:18.72px;font-size:14.6px;color:#222">32</div>
<div class="t mono" style="left:58.00px;top:583.32px;height:18.72px;line-height:18.72px;font-size:14.6px"><span style="color:#333">    printf</span><span style="color:#e8202a;font-weight:bold">(</span><span style="color:#333">&quot;</span><span style="color:#1010e0;font-weight:bold">%u:%c--&gt;%c</span><span style="color:#303080">\n&quot;</span><span style="color:#e8202a;font-weight:bold">,</span><span style="color:#333">n</span><span style="color:#e8202a;font-weight:bold">,</span><span style="color:#333">from</span><span style="color:#e8202a;font-weight:bold">,</span><span style="color:#333">to</span><span style="color:#e8202a;font-weight:bold">);</span></div>
<div class="t mono" style="left:9.50px;top:602.04px;height:18.72px;line-height:18.72px;font-size:14.6px;color:#222">33</div>
<div class="t mono" style="left:58.00px;top:602.04px;height:18.72px;line-height:18.72px;font-size:14.6px"><span style="color:#333">    x</span><span style="color:#e8202a;font-weight:bold">++;</span></div>
<div class="a" style="left:40px;top:92.08px;width:1px;height:217.89px;background:#111"></div>
<div class="a" style="left:40px;top:252.56px;width:9px;height:1px;background:#111"></div>
<div class="a" style="left:40px;top:308.72px;width:9px;height:1px;background:#111"></div>
<div class="a" style="left:40px;top:372.88px;width:1px;height:161.73px;background:#111"></div>
<div class="a" style="left:40px;top:514.64px;width:9px;height:1px;background:#111"></div>
<div class="a" style="left:40px;top:533.36px;width:9px;height:1px;background:#111"></div>
<div class="a" style="left:40px;top:578.80px;width:1px;height:33.95px;background:#111"></div>
<div class="a" style="left:33px;top:77.08px;width:16px;height:15px;background:#fff;border:1px solid #111"></div>
<div class="a" style="left:35.5px;top:84.08px;width:11px;height:1px;background:#111"></div>
<div class="a" style="left:33px;top:151.96px;width:16px;height:15px;background:#fff;border:1px solid #111"></div>
<div class="a" style="left:35.5px;top:158.96px;width:11px;height:1px;background:#111"></div>
<div class="a" style="left:33px;top:357.88px;width:16px;height:15px;background:#fff;border:1px solid #111"></div>
<div class="a" style="left:35.5px;top:364.88px;width:11px;height:1px;background:#111"></div>
<div class="a" style="left:33px;top:414.04px;width:16px;height:15px;background:#fff;border:1px solid #111"></div>
<div class="a" style="left:35.5px;top:421.04px;width:11px;height:1px;background:#111"></div>
<div class="a" style="left:33px;top:563.80px;width:16px;height:15px;background:#fff;border:1px solid #111"></div>
<div class="a" style="left:35.5px;top:570.80px;width:11px;height:1px;background:#111"></div>
<div class="a" style="left:92px;top:150.26px;width:1px;height:112.32px;background:repeating-linear-gradient(#888 0 1px,transparent 1px 2px)"></div>
<div class="a" style="left:92px;top:431.06px;width:1px;height:56.16px;background:repeating-linear-gradient(#888 0 1px,transparent 1px 2px)"></div>
</div>
<div class="a" style="left:992px;top:126px;width:928px;height:638px;background:#0c0c0c;border-left:1px solid #8a8a8a;border-top:1px solid #8a8a8a;box-shadow:0 0 12px rgba(0,0,0,0.22)"></div>
<div class="a" style="left:993px;top:127px;width:927px;height:37px;background:#fff"></div>
<svg class="a" style="left:1002px;top:137px" width="20" height="16"><rect x="0.5" y="0.5" width="18" height="14" fill="#e8e8e8" stroke="#9aa"/><rect x="2" y="3" width="8" height="10" fill="#3a8a8a"/><rect x="16" y="2" width="1.5" height="6" fill="#356"/></svg>
<div class="t" style="left:1027px;top:138px;font-size:15px;letter-spacing:0.7px;color:#999">C:\Users\Lenovo\Desktop\1.exe</div>
<div class="t mono" style="left:993px;top:164px;height:20px;line-height:20px;font-size:16.67px;color:#ccc"><span style="display:inline-block;vertical-align:top;position:relative;top:3.5px;transform:scaleY(1.27);transform-origin:50% 72%">1</span></div>
<div class="t mono" style="left:993px;top:184px;height:20px;line-height:20px;font-size:16.67px;color:#ccc"><span style="display:inline-block;vertical-align:top;position:relative;top:3.5px;transform:scaleY(1.27);transform-origin:50% 72%">1:A</span><span style="display:inline-block;vertical-align:top;width:10px;height:20px;background:linear-gradient(#ccc,#ccc) 0.5px 9px/9px 1.3px no-repeat"></span><span style="display:inline-block;vertical-align:top;width:10px;height:20px;background:linear-gradient(#ccc,#ccc) 0.5px 9px/9px 1.3px no-repeat"></span><span style="display:inline-block;vertical-align:top;position:relative;top:3.5px;transform:scaleY(1.27);transform-origin:50% 72%">&gt;C</span></div>
<div class="t mono" style="left:993px;top:204px;height:20px;line-height:20px;font-size:16.67px;color:#ccc"><span style="display:inline-block;vertical-align:top;width:20px;text-align:center;font-family:'Liberation Serif',serif;font-size:18px">次</span><span style="display:inline-block;vertical-align:top;width:20px;text-align:center;font-family:'Liberation Serif',serif;font-size:18px">数</span><span style="display:inline-block;vertical-align:top;width:20px;text-align:center;font-family:'Liberation Serif',serif;font-size:18px">为</span><span style="display:inline-block;vertical-align:top;position:relative;top:3.5px;transform:scaleY(1.27);transform-origin:50% 72%">1</span></div>
<div class="t mono" style="left:993px;top:224px;height:20px;line-height:20px;font-size:16.67px;color:#ccc"></div>
<div class="t mono" style="left:993px;top:244px;height:20px;line-height:20px;font-size:16.67px;color:#ccc"><span style="display:inline-block;vertical-align:top;position:relative;top:3.5px;transform:scaleY(1.27);transform-origin:50% 72%">2</span></div>
<div class="t mono" style="left:993px;top:264px;height:20px;line-height:20px;font-size:16.67px;color:#ccc"><span style="display:inline-block;vertical-align:top;position:relative;top:3.5px;transform:scaleY(1.27);transform-origin:50% 72%">1:A</span><span style="display:inline-block;vertical-align:top;width:10px;height:20px;background:linear-gradient(#ccc,#ccc) 0.5px 9px/9px 1.3px no-repeat"></span><span style="display:inline-block;vertical-align:top;width:10px;height:20px;background:linear-gradient(#ccc,#ccc) 0.5px 9px/9px 1.3px no-repeat"></span><span style="display:inline-block;vertical-align:top;position:relative;top:3.5px;transform:scaleY(1.27);transform-origin:50% 72%">&gt;B</span></div>
<div class="t mono" style="left:993px;top:284px;height:20px;line-height:20px;font-size:16.67px;color:#ccc"><span style="display:inline-block;vertical-align:top;position:relative;top:3.5px;transform:scaleY(1.27);transform-origin:50% 72%">2:A</span><span style="display:inline-block;vertical-align:top;width:10px;height:20px;background:linear-gradient(#ccc,#ccc) 0.5px 9px/9px 1.3px no-repeat"></span><span style="display:inline-block;vertical-align:top;width:10px;height:20px;background:linear-gradient(#ccc,#ccc) 0.5px 9px/9px 1.3px no-repeat"></span><span style="display:inline-block;vertical-align:top;position:relative;top:3.5px;transform:scaleY(1.27);transform-origin:50% 72%">&gt;C</span></div>
<div class="t mono" style="left:993px;top:304px;height:20px;line-height:20px;font-size:16.67px;color:#ccc"><span style="display:inline-block;vertical-align:top;position:relative;top:3.5px;transform:scaleY(1.27);transform-origin:50% 72%">1:B</span><span style="display:inline-block;vertical-align:top;width:10px;height:20px;background:linear-gradient(#ccc,#ccc) 0.5px 9px/9px 1.3px no-repeat"></span><span style="display:inline-block;vertical-align:top;width:10px;height:20px;background:linear-gradient(#ccc,#ccc) 0.5px 9px/9px 1.3px no-repeat"></span><span style="display:inline-block;vertical-align:top;position:relative;top:3.5px;transform:scaleY(1.27);transform-origin:50% 72%">&gt;C</span></div>
<div class="t mono" style="left:993px;top:324px;height:20px;line-height:20px;font-size:16.67px;color:#ccc"><span style="display:inline-block;vertical-align:top;width:20px;text-align:center;font-family:'Liberation Serif',serif;font-size:18px">次</span><span style="display:inline-block;vertical-align:top;width:20px;text-align:center;font-family:'Liberation Serif',serif;font-size:18px">数</span><span style="display:inline-block;vertical-align:top;width:20px;text-align:center;font-family:'Liberation Serif',serif;font-size:18px">为</span><span style="display:inline-block;vertical-align:top;position:relative;top:3.5px;transform:scaleY(1.27);transform-origin:50% 72%">3</span></div>
<div class="t mono" style="left:993px;top:344px;height:20px;line-height:20px;font-size:16.67px;color:#ccc"></div>
<div class="t mono" style="left:993px;top:364px;height:20px;line-height:20px;font-size:16.67px;color:#ccc"><span style="display:inline-block;vertical-align:top;position:relative;top:3.5px;transform:scaleY(1.27);transform-origin:50% 72%">3</span></div>
<div class="t mono" style="left:993px;top:384px;height:20px;line-height:20px;font-size:16.67px;color:#ccc"><span style="display:inline-block;vertical-align:top;position:relative;top:3.5px;transform:scaleY(1.27);transform-origin:50% 72%">1:A</span><span style="display:inline-block;vertical-align:top;width:10px;height:20px;background:linear-gradient(#ccc,#ccc) 0.5px 9px/9px 1.3px no-repeat"></span><span style="display:inline-block;vertical-align:top;width:10px;height:20px;background:linear-gradient(#ccc,#ccc) 0.5px 9px/9px 1.3px no-repeat"></span><span style="display:inline-block;vertical-align:top;position:relative;top:3.5px;transform:scaleY(1.27);transform-origin:50% 72%">&gt;C</span></div>
<div class="t mono" style="left:993px;top:404px;height:20px;line-height:20px;font-size:16.67px;color:#ccc"><span style="display:inline-block;vertical-align:top;position:relative;top:3.5px;transform:scaleY(1.27);transform-origin:50% 72%">2:A</span><span style="display:inline-block;vertical-align:top;width:10px;height:20px;background:linear-gradient(#ccc,#ccc) 0.5px 9px/9px 1.3px no-repeat"></span><span style="display:inline-block;vertical-align:top;width:10px;height:20px;background:linear-gradient(#ccc,#ccc) 0.5px 9px/9px 1.3px no-repeat"></span><span style="display:inline-block;vertical-align:top;position:relative;top:3.5px;transform:scaleY(1.27);transform-origin:50% 72%">&gt;B</span></div>
<div class="t mono" style="left:993px;top:424px;height:20px;line-height:20px;font-size:16.67px;color:#ccc"><span style="display:inline-block;vertical-align:top;position:relative;top:3.5px;transform:scaleY(1.27);transform-origin:50% 72%">1:C</span><span style="display:inline-block;vertical-align:top;width:10px;height:20px;background:linear-gradient(#ccc,#ccc) 0.5px 9px/9px 1.3px no-repeat"></span><span style="display:inline-block;vertical-align:top;width:10px;height:20px;background:linear-gradient(#ccc,#ccc) 0.5px 9px/9px 1.3px no-repeat"></span><span style="display:inline-block;vertical-align:top;position:relative;top:3.5px;transform:scaleY(1.27);transform-origin:50% 72%">&gt;B</span></div>
<div class="t mono" style="left:993px;top:444px;height:20px;line-height:20px;font-size:16.67px;color:#ccc"><span style="display:inline-block;vertical-align:top;position:relative;top:3.5px;transform:scaleY(1.27);transform-origin:50% 72%">3:A</span><span style="display:inline-block;vertical-align:top;width:10px;height:20px;background:linear-gradient(#ccc,#ccc) 0.5px 9px/9px 1.3px no-repeat"></span><span style="display:inline-block;vertical-align:top;width:10px;height:20px;background:linear-gradient(#ccc,#ccc) 0.5px 9px/9px 1.3px no-repeat"></span><span style="display:inline-block;vertical-align:top;position:relative;top:3.5px;transform:scaleY(1.27);transform-origin:50% 72%">&gt;C</span></div>
<div class="t mono" style="left:993px;top:464px;height:20px;line-height:20px;font-size:16.67px;color:#ccc"><span style="display:inline-block;vertical-align:top;position:relative;top:3.5px;transform:scaleY(1.27);transform-origin:50% 72%">1:B</span><span style="display:inline-block;vertical-align:top;width:10px;height:20px;background:linear-gradient(#ccc,#ccc) 0.5px 9px/9px 1.3px no-repeat"></span><span style="display:inline-block;vertical-align:top;width:10px;height:20px;background:linear-gradient(#ccc,#ccc) 0.5px 9px/9px 1.3px no-repeat"></span><span style="display:inline-block;vertical-align:top;position:relative;top:3.5px;transform:scaleY(1.27);transform-origin:50% 72%">&gt;A</span></div>
<div class="t mono" style="left:993px;top:484px;height:20px;line-height:20px;font-size:16.67px;color:#ccc"><span style="display:inline-block;vertical-align:top;position:relative;top:3.5px;transform:scaleY(1.27);transform-origin:50% 72%">2:B</span><span style="display:inline-block;vertical-align:top;width:10px;height:20px;background:linear-gradient(#ccc,#ccc) 0.5px 9px/9px 1.3px no-repeat"></span><span style="display:inline-block;vertical-align:top;width:10px;height:20px;background:linear-gradient(#ccc,#ccc) 0.5px 9px/9px 1.3px no-repeat"></span><span style="display:inline-block;vertical-align:top;position:relative;top:3.5px;transform:scaleY(1.27);transform-origin:50% 72%">&gt;C</span></div>
<div class="t mono" style="left:993px;top:504px;height:20px;line-height:20px;font-size:16.67px;color:#ccc"><span style="display:inline-block;vertical-align:top;position:relative;top:3.5px;transform:scaleY(1.27);transform-origin:50% 72%">1:A</span><span style="display:inline-block;vertical-align:top;width:10px;height:20px;background:linear-gradient(#ccc,#ccc) 0.5px 9px/9px 1.3px no-repeat"></span><span style="display:inline-block;vertical-align:top;width:10px;height:20px;background:linear-gradient(#ccc,#ccc) 0.5px 9px/9px 1.3px no-repeat"></span><span style="display:inline-block;vertical-align:top;position:relative;top:3.5px;transform:scaleY(1.27);transform-origin:50% 72%">&gt;C</span></div>
<div class="t mono" style="left:993px;top:524px;height:20px;line-height:20px;font-size:16.67px;color:#ccc"><span style="display:inline-block;vertical-align:top;width:20px;text-align:center;font-family:'Liberation Serif',serif;font-size:18px">次</span><span style="display:inline-block;vertical-align:top;width:20px;text-align:center;font-family:'Liberation Serif',serif;font-size:18px">数</span><span style="display:inline-block;vertical-align:top;width:20px;text-align:center;font-family:'Liberation Serif',serif;font-size:18px">为</span><span style="display:inline-block;vertical-align:top;position:relative;top:3.5px;transform:scaleY(1.27);transform-origin:50% 72%">7</span></div>
<div class="t mono" style="left:993px;top:544px;height:20px;line-height:20px;font-size:16.67px;color:#ccc"></div>
<div class="t mono" style="left:993px;top:564px;height:20px;line-height:20px;font-size:16.67px;color:#ccc"><span style="display:inline-block;vertical-align:top;position:relative;top:3.5px;transform:scaleY(1.27);transform-origin:50% 72%">^Z</span></div>
<div class="t mono" style="left:993px;top:584px;height:20px;line-height:20px;font-size:16.67px;color:#ccc"></div>
<div class="t mono" style="left:993px;top:604px;height:20px;line-height:20px;font-size:16.67px;color:#ccc"><span style="display:inline-block;vertical-align:top;width:10px;height:20px;background:linear-gradient(#ccc,#ccc) 0.5px 9px/9px 1.3px no-repeat"></span><span style="display:inline-block;vertical-align:top;width:10px;height:20px;background:linear-gradient(#ccc,#ccc) 0.5px 9px/9px 1.3px no-repeat"></span><span style="display:inline-block;vertical-align:top;width:10px;height:20px;background:linear-gradient(#ccc,#ccc) 0.5px 9px/9px 1.3px no-repeat"></span><span style="display:inline-block;vertical-align:top;width:10px;height:20px;background:linear-gradient(#ccc,#ccc) 0.5px 9px/9px 1.3px no-repeat"></span><span style="display:inline-block;vertical-align:top;width:10px;height:20px;background:linear-gradient(#ccc,#ccc) 0.5px 9px/9px 1.3px no-repeat"></span><span style="display:inline-block;vertical-align:top;width:10px;height:20px;background:linear-gradient(#ccc,#ccc) 0.5px 9px/9px 1.3px no-repeat"></span><span style="display:inline-block;vertical-align:top;width:10px;height:20px;background:linear-gradient(#ccc,#ccc) 0.5px 9px/9px 1.3px no-repeat"></span><span style="display:inline-block;vertical-align:top;width:10px;height:20px;background:linear-gradient(#ccc,#ccc) 0.5px 9px/9px 1.3px no-repeat"></span><span style="display:inline-block;vertical-align:top;width:10px;height:20px;background:linear-gradient(#ccc,#ccc) 0.5px 9px/9px 1.3px no-repeat"></span><span style="display:inline-block;vertical-align:top;width:10px;height:20px;background:linear-gradient(#ccc,#ccc) 0.5px 9px/9px 1.3px no-repeat"></span><span style="display:inline-block;vertical-align:top;width:10px;height:20px;background:linear-gradient(#ccc,#ccc) 0.5px 9px/9px 1.3px no-repeat"></span><span style="display:inline-block;vertical-align:top;width:10px;height:20px;background:linear-gradient(#ccc,#ccc) 0.5px 9px/9px 1.3px no-repeat"></span><span style="display:inline-block;vertical-align:top;width:10px;height:20px;background:linear-gradient(#ccc,#ccc) 0.5px 9px/9px 1.3px no-repeat"></span><span style="display:inline-block;vertical-align:top;width:10px;height:20px;background:linear-gradient(#ccc,#ccc) 0.5px 9px/9px 1.3px no-repeat"></span><span style="display:inline-block;vertical-align:top;width:10px;height:20px;background:linear-gradient(#ccc,#ccc) 0.5px 9px/9px 1.3px no-repeat"></span><span style="display:inline-block;vertical-align:top;width:10px;height:20px;background:linear-gradient(#ccc,#ccc) 0.5px 9px/9px 1.3px no-repeat"></span><span style="display:inline-block;vertical-align:top;width:10px;height:20px;background:linear-gradient(#ccc,#ccc) 0.5px 9px/9px 1.3px no-repeat"></span><span style="display:inline-block;vertical-align:top;width:10px;height:20px;background:linear-gradient(#ccc,#ccc) 0.5px 9px/9px 1.3px no-repeat"></span><span style="display:inline-block;vertical-align:top;width:10px;height:20px;background:linear-gradient(#ccc,#ccc) 0.5px 9px/9px 1.3px no-repeat"></span><span style="display:inline-block;vertical-align:top;width:10px;height:20px;background:linear-gradient(#ccc,#ccc) 0.5px 9px/9px 1.3px no-repeat"></span><span style="display:inline-block;vertical-align:top;width:10px;height:20px;background:linear-gradient(#ccc,#ccc) 0.5px 9px/9px 1.3px no-repeat"></span><span style="display:inline-block;vertical-align:top;width:10px;height:20px;background:linear-gradient(#ccc,#ccc) 0.5px 9px/9px 1.3px no-repeat"></span><span style="display:inline-block;vertical-align:top;width:10px;height:20px;background:linear-gradient(#ccc,#ccc) 0.5px 9px/9px 1.3px no-repeat"></span><span style="display:inline-block;vertical-align:top;width:10px;height:20px;background:linear-gradient(#ccc,#ccc) 0.5px 9px/9px 1.3px no-repeat"></span><span style="display:inline-block;vertical-align:top;width:10px;height:20px;background:linear-gradient(#ccc,#ccc) 0.5px 9px/9px 1.3px no-repeat"></span><span style="display:inline-block;vertical-align:top;width:10px;height:20px;background:linear-gradient(#ccc,#ccc) 0.5px 9px/9px 1.3px no-repeat"></span><span style="display:inline-block;vertical-align:top;width:10px;height:20px;background:linear-gradient(#ccc,#ccc) 0.5px 9px/9px 1.3px no-repeat"></span><span style="display:inline-block;vertical-align:top;width:10px;height:20px;background:linear-gradient(#ccc,#ccc) 0.5px 9px/9px 1.3px no-repeat"></span><span style="display:inline-block;vertical-align:top;width:10px;height:20px;background:linear-gradient(#ccc,#ccc) 0.5px 9px/9px 1.3px no-repeat"></span><span style="display:inline-block;vertical-align:top;width:10px;height:20px;background:linear-gradient(#ccc,#ccc) 0.5px 9px/9px 1.3px no-repeat"></span><span style="display:inline-block;vertical-align:top;width:10px;height:20px;background:linear-gradient(#ccc,#ccc) 0.5px 9px/9px 1.3px no-repeat"></span><span style="display:inline-block;vertical-align:top;width:10px;height:20px;background:linear-gradient(#ccc,#ccc) 0.5px 9px/9px 1.3px no-repeat"></span></div>
<div class="t mono" style="left:993px;top:624px;height:20px;line-height:20px;font-size:16.67px;color:#ccc"><span style="display:inline-block;vertical-align:top;position:relative;top:3.5px;transform:scaleY(1.27);transform-origin:50% 72%">Process exited after 67.11 seconds with return value 0</span></div>
<div class="t mono" style="left:993px;top:644px;height:20px;line-height:20px;font-size:16.67px;color:#ccc"><span style="display:inline-block;vertical-align:top;width:20px;text-align:center;font-family:'Liberation Serif',serif;font-size:18px">请</span><span style="display:inline-block;vertical-align:top;width:20px;text-align:center;font-family:'Liberation Serif',serif;font-size:18px">按</span><span style="display:inline-block;vertical-align:top;width:20px;text-align:center;font-family:'Liberation Serif',serif;font-size:18px">任</span><span style="display:inline-block;vertical-align:top;width:20px;text-align:center;font-family:'Liberation Serif',serif;font-size:18px">意</span><span style="display:inline-block;vertical-align:top;width:20px;text-align:center;font-family:'Liberation Serif',serif;font-size:18px">键</span><span style="display:inline-block;vertical-align:top;width:20px;text-align:center;font-family:'Liberation Serif',serif;font-size:18px">继</span><span style="display:inline-block;vertical-align:top;width:20px;text-align:center;font-family:'Liberation Serif',serif;font-size:18px">续</span><span style="display:inline-block;vertical-align:top;position:relative;top:3.5px;transform:scaleY(1.27);transform-origin:50% 72%">. . .</span></div>
<div class="a" style="left:1909px;top:572px;width:7px;height:62px;border-radius:4px;background:#555"></div>
<div class="a" style="left:1910px;top:608px;width:5px;height:24px;border-radius:3px;background:#f08a30"></div>
<div class="a" style="left:2px;top:804px;width:1916px;height:1px;background:#d9d9d9"></div>
<div class="a" style="left:3px;top:779px;width:89px;height:26px;background:#f0f0f0;border:1px solid #d9d9d9;border-bottom:none"></div>
<div class="a" style="left:92px;top:779px;width:75px;height:26px;background:#f0f0f0;border:1px solid #d9d9d9;border-bottom:none"></div>
<div class="a" style="left:167px;top:776px;width:111px;height:30px;background:#fff;border:1px solid #d9d9d9;border-bottom:none"></div>
<div class="a" style="left:278px;top:779px;width:72px;height:26px;background:#f0f0f0;border:1px solid #d9d9d9;border-bottom:none"></div>
<div class="a" style="left:350px;top:779px;width:108px;height:26px;background:#f0f0f0;border:1px solid #d9d9d9;border-bottom:none"></div>
<div class="a" style="left:458px;top:779px;width:72px;height:26px;background:#f0f0f0;border:1px solid #d9d9d9;border-bottom:none"></div>
<svg class="a" style="left:9px;top:780px" width="22" height="22" viewBox="0 0 22 22"><rect x="1.5" y="2.5" width="7" height="7" fill="#f08a40" stroke="#222" stroke-width="1.5"/><rect x="12.5" y="2.5" width="7" height="7" fill="#60c050" stroke="#222" stroke-width="1.5"/><rect x="1.5" y="13.5" width="7" height="7" fill="#70b0f0" stroke="#222" stroke-width="1.5"/><rect x="12.5" y="13.5" width="7" height="7" fill="#f0e050" stroke="#222" stroke-width="1.5"/></svg>
<div class="t" style="left:38px;top:782px;font-size:16px;color:#333">编译器</div>
<svg class="a" style="left:100px;top:780px" width="22" height="22" viewBox="0 0 22 22"><rect x="1.5" y="1.5" width="9" height="9" fill="#7080e0" stroke="#222"/><rect x="5.5" y="5.5" width="9" height="9" fill="#50b050" stroke="#222"/><rect x="9.5" y="9.5" width="10" height="10" fill="#e04030" stroke="#222"/></svg>
<div class="t" style="left:129px;top:782px;font-size:16px;color:#333">资源</div>
<svg class="a" style="left:175px;top:778px" width="22" height="22" viewBox="0 0 22 22"><rect x="1.5" y="11.5" width="4" height="9" fill="#f08a40" stroke="#222"/><rect x="6.5" y="6.5" width="4" height="14" fill="#60c050" stroke="#222"/><rect x="11.5" y="2.5" width="4" height="18" fill="#70b0f0" stroke="#222"/><rect x="16.5" y="9.5" width="4" height="11" fill="#f0e050" stroke="#222"/></svg>
<div class="t" style="left:204px;top:780px;font-size:16px;color:#333">编译日志</div>
<svg class="a" style="left:282px;top:780px" width="22" height="22" viewBox="0 0 22 22"><path d="M2 13 L5 11 L9 16 L19 2 L21 4 L10 20 L8 20z" fill="#b090f0" stroke="#5a3a9a" stroke-width="1.2" stroke-linejoin="round"/></svg>
<div class="t" style="left:311px;top:782px;font-size:16px;color:#333">调试</div>
<svg class="a" style="left:358px;top:780px" width="22" height="22" viewBox="0 0 22 22"><rect x="1.5" y="1.5" width="14" height="19" fill="#ddd" stroke="#222" stroke-width="1.5"/><circle cx="10" cy="9" r="5" fill="#9fe0f0" stroke="#222" stroke-width="1.5"/><path d="M13.5 12.5L18 17" stroke="#222" stroke-width="3"/><path d="M13.5 12.5L18 17" stroke="#d9a030" stroke-width="1.6"/></svg>
<div class="t" style="left:386px;top:782px;font-size:16px;color:#333">搜索结果</div>
<svg class="a" style="left:464px;top:780px" width="22" height="22" viewBox="0 0 22 22"><rect x="7.5" y="1.5" width="13" height="19" fill="#ddd" stroke="#222" stroke-width="1.5"/><path d="M11 6h2M14 6h2M11 10h2M14 10h2M11 14h2M14 14h2" stroke="#777"/><path d="M2.5 4.5L9.5 11.5M9.5 4.5L2.5 11.5" stroke="#b00" stroke-width="5" stroke-linecap="round"/><path d="M2.5 4.5L9.5 11.5M9.5 4.5L2.5 11.5" stroke="#f33" stroke-width="3" stroke-linecap="round"/></svg>
<div class="t" style="left:493px;top:782px;font-size:16px;color:#333">关闭</div>
<div class="a" style="left:2px;top:805px;width:1916px;height:198px;background:#fff"></div>
<div class="a" style="left:11px;top:815px;width:177px;height:34px;background:#cccccc"></div>
<div class="t" style="left:84px;top:825px;font-size:16px;color:#f4f4f4">中止</div>
<div class="a" style="left:10px;top:859px;width:180px;height:30px;background:#e6e6e6;border:1px solid #bcbcbc"></div>
<div class="a" style="left:10px;top:897px;width:16px;height:17px;background:#fff;border:1px solid #333"></div>
<div class="t" style="left:30px;top:898.5px;font-size:15px;color:#222">Shorten compiler paths</div>
<div class="a" style="left:200px;top:809px;width:1716px;height:190px;background:#fff;border:1px solid #828282"></div>
<div class="t mono" style="left:207px;top:811px;height:20px;line-height:20px;font-size:16.67px;color:#333"><span style="display:inline-block;width:20px;text-align:center;font-family:'Liberation Sans',sans-serif;font-size:18px">编</span><span style="display:inline-block;width:20px;text-align:center;font-family:'Liberation Sans',sans-serif;font-size:18px">译</span><span style="display:inline-block;width:20px;text-align:center;font-family:'Liberation Sans',sans-serif;font-size:18px">结</span><span style="display:inline-block;width:20px;text-align:center;font-family:'Liberation Sans',sans-serif;font-size:18px">果</span>...</div>
<div class="t mono" style="left:207px;top:831px;height:20px;line-height:20px;font-size:16.67px;color:#333">--------</div>
<div class="t mono" style="left:207px;top:851px;height:20px;line-height:20px;font-size:16.67px;color:#333">- <span style="display:inline-block;width:20px;text-align:center;font-family:'Liberation Sans',sans-serif;font-size:18px">错</span><span style="display:inline-block;width:20px;text-align:center;font-family:'Liberation Sans',sans-serif;font-size:18px">误</span>: 0</div>
<div class="t mono" style="left:207px;top:871px;height:20px;line-height:20px;font-size:16.67px;color:#333">- <span style="display:inline-block;width:20px;text-align:center;font-family:'Liberation Sans',sans-serif;font-size:18px">警</span><span style="display:inline-block;width:20px;text-align:center;font-family:'Liberation Sans',sans-serif;font-size:18px">告</span>: 0</div>
<div class="t mono" style="left:207px;top:891px;height:20px;line-height:20px;font-size:16.67px;color:#333">- <span style="display:inline-block;width:20px;text-align:center;font-family:'Liberation Sans',sans-serif;font-size:18px">输</span><span style="display:inline-block;width:20px;text-align:center;font-family:'Liberation Sans',sans-serif;font-size:18px">出</span><span style="display:inline-block;width:20px;text-align:center;font-family:'Liberation Sans',sans-serif;font-size:18px">文</span><span style="display:inline-block;width:20px;text-align:center;font-family:'Liberation Sans',sans-serif;font-size:18px">件</span><span style="display:inline-block;width:20px;text-align:center;font-family:'Liberation Sans',sans-serif;font-size:18px">名</span>: C:\Users\Lenovo\Desktop\1.exe</div>
<div class="t mono" style="left:207px;top:911px;height:20px;line-height:20px;font-size:16.67px;color:#333">- <span style="display:inline-block;width:20px;text-align:center;font-family:'Liberation Sans',sans-serif;font-size:18px">输</span><span style="display:inline-block;width:20px;text-align:center;font-family:'Liberation Sans',sans-serif;font-size:18px">出</span><span style="display:inline-block;width:20px;text-align:center;font-family:'Liberation Sans',sans-serif;font-size:18px">大</span><span style="display:inline-block;width:20px;text-align:center;font-family:'Liberation Sans',sans-serif;font-size:18px">小</span>: 129.43359375 KiB</div>
<div class="t mono" style="left:207px;top:931px;height:20px;line-height:20px;font-size:16.67px;color:#333">- <span style="display:inline-block;width:20px;text-align:center;font-family:'Liberation Sans',sans-serif;font-size:18px">编</span><span style="display:inline-block;width:20px;text-align:center;font-family:'Liberation Sans',sans-serif;font-size:18px">译</span><span style="display:inline-block;width:20px;text-align:center;font-family:'Liberation Sans',sans-serif;font-size:18px">时</span><span style="display:inline-block;width:20px;text-align:center;font-family:'Liberation Sans',sans-serif;font-size:18px">间</span>: 0.59s</div>
<div class="a" style="left:1892px;top:810px;width:23px;height:168px;background:#f0f0f0"></div>
<svg class="a" style="left:1895px;top:815px" width="14" height="12"><path d="M2 9L7 4L12 9" fill="none" stroke="#555" stroke-width="2"/></svg>
<svg class="a" style="left:1895px;top:958px" width="14" height="12"><path d="M2 3L7 8L12 3" fill="none" stroke="#555" stroke-width="2"/></svg>
<div class="a" style="left:1893px;top:900px;width:18px;height:55px;background:#cdcdcd"></div>
<div class="a" style="left:201px;top:977px;width:1714px;height:21px;background:#f0f0f0"></div>
<div class="a" style="left:222px;top:979px;width:552px;height:18px;background:#cdcdcd"></div>
<svg class="a" style="left:205px;top:981px" width="12" height="14"><path d="M9 2L4 7L9 12" fill="none" stroke="#555" stroke-width="2"/></svg>
<svg class="a" style="left:1874px;top:981px" width="12" height="14"><path d="M3 2L8 7L3 12" fill="none" stroke="#555" stroke-width="2"/></svg>
<div class="a" style="left:0;top:1003px;width:1920px;height:27px;background:#f0f0f0;border-top:1px solid #e0e0e0"></div>
<div class="t" style="left:3px;top:1009px;font-size:16px;color:#333">行:</div>
<div class="t" style="left:35px;top:1010px;font-size:15px;color:#333">31</div>
<div class="t" style="left:108px;top:1009px;font-size:16px;color:#333">列:</div>
<div class="t" style="left:146px;top:1010px;font-size:15px;color:#333">2</div>
<div class="t" style="left:211px;top:1009px;font-size:16px;color:#333">已选择:</div>
<div class="t" style="left:281px;top:1010px;font-size:15px;color:#333">0</div>
<div class="t" style="left:346px;top:1009px;font-size:16px;color:#333">总行数:</div>
<div class="t" style="left:413px;top:1010px;font-size:15px;color:#333">34</div>
<div class="t" style="left:485px;top:1009px;font-size:16px;color:#333">长度:</div>
<div class="t" style="left:531px;top:1010px;font-size:15px;color:#333">831</div>
<div class="t" style="left:604px;top:1009px;font-size:16px;color:#333">插入</div>
<div class="t" style="left:704px;top:1009px;font-size:16px;color:#333">在<span style="font-size:15px"> 0 </span>秒内完成解析</div>
<div class="a" style="left:597px;top:1007px;width:1px;height:22px;background:#d0d0d0"></div>
<div class="a" style="left:699px;top:1007px;width:1px;height:22px;background:#d0d0d0"></div>
<div class="a" style="left:0;top:1030px;width:1920px;height:50px;background:linear-gradient(90deg,#1c1c1c 0,#1e1e1e 380px,#262626 500px,#323232 575px,#2a2a2a 660px,#232323 760px,#202020 900px,#1f1f1f 1920px)"></div>
<div class="a" style="left:310px;top:1030px;width:61px;height:50px;background:#3b3b3b"></div>
<div class="a" style="left:1693px;top:1030px;width:40px;height:50px;background:#2c2c2c"></div>
<div class="a" style="left:129px;top:1077px;width:51px;height:3px;background:#76b9ed"></div>
<div class="a" style="left:253px;top:1077px;width:51px;height:3px;background:#76b9ed"></div>
<div class="a" style="left:310px;top:1077px;width:61px;height:3px;background:#76b9ed"></div>
<svg class="a" style="left:20px;top:1045px" width="21" height="21"><path d="M0 3L8.5 1.8V9.8H0z M9.6 1.6L20.5 0V9.8H9.6z M0 10.9H8.5V19L0 17.8z M9.6 10.9H20.5V21L9.6 19.4z" fill="#fff"/></svg>
<svg class="a" style="left:79px;top:1044px" width="22" height="22"><circle cx="13" cy="8.5" r="6.5" fill="none" stroke="#fff" stroke-width="1.5"/><path d="M8.5 13L1.5 20.5" stroke="#fff" stroke-width="1.6"/></svg>
<div class="a" style="left:140px;top:1040px;width:28px;height:29px;background:linear-gradient(#5a7ad8,#1d3fa8);border:1px solid #0d2060"></div>
<div class="t" style="left:143px;top:1043px;font-size:10px;font-weight:bold;color:#e8eeff">DEV</div>
<div class="t" style="left:143px;top:1055px;font-size:11px;font-weight:bold;color:#3a8cf0">C++</div>
<svg class="a" style="left:200px;top:1040px" width="32" height="30"><rect x="1" y="1" width="22" height="18" fill="#f5e6a0" stroke="#c9a030" stroke-width="1.5"/><path d="M6 6h6M9 3v6M12 10h6M15 7v6" stroke="#a07000" stroke-width="1.5"/><path d="M8 22h14" stroke="#3090e0" stroke-width="3"/><path d="M20 17l6 5-6 5z" fill="#3090e0"/></svg>
<svg class="a" style="left:262px;top:1040px" width="34" height="30"><circle cx="14" cy="14" r="10.5" fill="none" stroke="#1e90f0" stroke-width="5"/><path d="M17 27q-3 0-3-3q0-3 3-3q1-4 5-4q4 0 5 4q4 0 4 3q0 3-3 3z" fill="#fff"/></svg>
<svg class="a" style="left:325px;top:1042px" width="30" height="26"><rect x="1" y="2" width="27" height="22" fill="#e8eef0" stroke="#aab" stroke-width="1"/><rect x="3" y="6" width="14" height="16" fill="#3a8a70"/><rect x="23" y="5" width="2" height="8" fill="#356"/></svg>
<svg class="a" style="left:1421px;top:1044px" width="28" height="20"><path d="M6 19q-5 0-5-5q0-4 4-5q1-7 8-7q6 0 8 5q5 0 5 6q0 6-5 6z" fill="#cfe6f8" stroke="#a8c8e8" stroke-width="0.5"/></svg>
<div class="t" style="left:1460px;top:1046px;font-size:19px;color:#fff">25°C</div>
<div class="t" style="left:1511px;top:1047px;font-size:18px;color:#fff">阴</div>
<svg class="a" style="left:1549px;top:1049px" width="18" height="12"><path d="M1 10L9 2L17 10" fill="none" stroke="#fff" stroke-width="1.3"/></svg>
<svg class="a" style="left:1579px;top:1044px" width="18" height="22"><ellipse cx="9" cy="11" rx="8" ry="10.5" fill="#1a80e8"/><path d="M5.5 7.5L12 14L9 17V5L12 8L5.5 14.5" fill="none" stroke="#fff" stroke-width="1.2"/></svg>
<svg class="a" style="left:1607px;top:1046px" width="22" height="16"><path d="M3 1v3M6 1v3M2 4h5v3h-5z" stroke="#fff" fill="none" stroke-width="1"/><rect x="3.5" y="6.5" width="16" height="8" fill="none" stroke="#fff" stroke-width="1.3"/><rect x="5" y="8" width="13" height="5" fill="#fff"/><rect x="20" y="9" width="1.5" height="3" fill="#fff"/></svg>
<svg class="a" style="left:1640px;top:1046px" width="18" height="18"><path d="M1 17A15 15 0 0 1 16 2M4 17A12 12 0 0 1 16 5M7 17A9 9 0 0 1 16 8M10 17A6 6 0 0 1 16 11" fill="none" stroke="#fff" stroke-width="1"/><circle cx="15" cy="16" r="1.5" fill="#fff"/></svg>
<svg class="a" style="left:1667px;top:1045px" width="22" height="20"><path d="M1.5 7h3l5-4.5v15l-5-4.5h-3z" fill="none" stroke="#fff" stroke-width="1.2"/><path d="M12.5 8a3 3 0 0 1 0 4M15 5.5a6.5 6.5 0 0 1 0 9M17.5 3a10 10 0 0 1 0 14" fill="none" stroke="#ccc" stroke-width="1"/></svg>
<svg class="a" style="left:1702px;top:1044px" width="24" height="22"><path d="M9 19L18 3q2-1 2.5 1L12 19q-1 1-3 1z" fill="none" stroke="#fff" stroke-width="1.2"/><path d="M8 13q-6 1-5 6q1 2 4 0M16 10q4 1 2 3l-3 1" fill="none" stroke="#fff" stroke-width="1.2"/></svg>
<div class="t" style="left:1737px;top:1046px;font-size:18px;color:#fff">英</div>
<div class="t" style="left:1787px;top:1036px;font-size:16px;letter-spacing:0.3px;color:#fff">17:59</div>
<div class="t" style="left:1770px;top:1058px;font-size:16px;letter-spacing:0.5px;color:#fff">2022/4/23</div>
<svg class="a" style="left:1868px;top:1044px" width="22" height="22"><path d="M1 1h20v16h-8l-2 3-2-3h-8z" fill="#fff"/><path d="M5 6h12M5 9h12M5 12h8" stroke="#1d1d1d" stroke-width="1.2"/></svg>
<div class="a" style="left:1914px;top:1030px;width:1px;height:50px;background:#555"></div>
</body></html>
